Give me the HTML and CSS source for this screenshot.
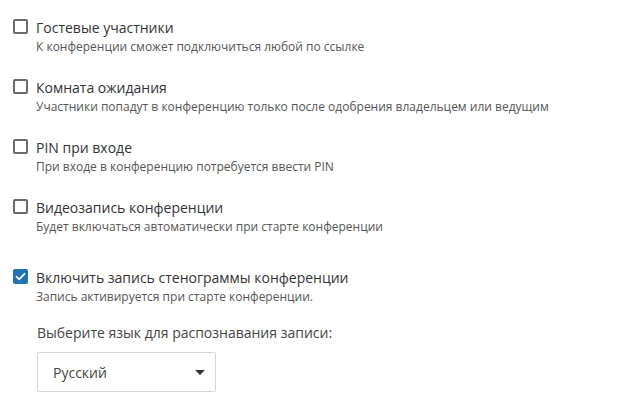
FILE: index.html
```html
<!DOCTYPE html>
<html lang="ru">
<head>
<meta charset="utf-8">
<link rel="stylesheet" href="styles.css">
</head>
<body>
<div class="settings">
  <div class="option">
    <span class="box"></span>
    <div class="text">
      <div class="title">Гостевые участники</div>
      <div class="desc">К конференции сможет подключиться любой по ссылке</div>
    </div>
  </div>
  <div class="option">
    <span class="box"></span>
    <div class="text">
      <div class="title">Комната ожидания</div>
      <div class="desc">Участники попадут в конференцию только после одобрения владельцем или ведущим</div>
    </div>
  </div>
  <div class="option">
    <span class="box"></span>
    <div class="text">
      <div class="title">PIN при входе</div>
      <div class="desc">При входе в конференцию потребуется ввести PIN</div>
    </div>
  </div>
  <div class="option">
    <span class="box"></span>
    <div class="text">
      <div class="title">Видеозапись конференции</div>
      <div class="desc">Будет включаться автоматически при старте конференции</div>
    </div>
  </div>
  <div class="option option-last">
    <span class="box checked">
      <svg viewBox="0 0 15 15" width="15" height="15"><path d="M3.5 7.7 L6.2 10.3 L11.5 4.8" fill="none" stroke="#fff" stroke-width="1.8" stroke-linecap="round" stroke-linejoin="round"/></svg>
    </span>
    <div class="text">
      <div class="title">Включить запись стенограммы конференции</div>
      <div class="desc">Запись активируется при старте конференции.</div>
      <div class="lang-label">Выберите язык для распознавания записи:</div>
      <div class="select">
        <span class="select-value">Русский</span>
        <span class="caret"></span>
      </div>
    </div>
  </div>
</div>
</body>
</html>
```

FILE: styles.css
```css
html, body {
  margin: 0;
  padding: 0;
  background: #ffffff;
}
body {
  font-family: "Open Sans", "Noto Sans", sans-serif;
  color: #333333;
}
.settings {
  padding: 18px 0 0 13px;
}
.option {
  display: flex;
  gap: 8px;
  align-items: flex-start;
  margin-bottom: 22px;
}
.option-last {
  margin-top: 32px;
}
.box {
  flex: none;
  width: 15px;
  height: 15px;
  box-sizing: border-box;
  border: 2px solid #6b6b6b;
  border-radius: 2px;
  margin-top: 1px;
  position: relative;
}
.box.checked {
  background: #1f72b6;
  border-color: #1f72b6;
}
.box.checked svg {
  position: absolute;
  left: -2px;
  top: -2px;
}
.title {
  font-size: 14px;
  line-height: 20px;
  color: #333333;
}
.desc {
  font-size: 12px;
  line-height: 18px;
  color: #555555;
}
.lang-label {
  margin-top: 17px;
  margin-left: 1px;
  font-size: 14px;
  line-height: 20px;
  color: #444444;
}
.select {
  margin-top: 9px;
  margin-left: 1px;
  width: 179px;
  height: 40px;
  box-sizing: border-box;
  border: 1px solid #d6d6d6;
  border-radius: 2px;
  display: flex;
  align-items: center;
  justify-content: space-between;
  padding: 0 10px 0 15px;
}
.select-value {
  font-size: 14px;
  color: #444444;
}
.caret {
  width: 0;
  height: 0;
  border-left: 5px solid transparent;
  border-right: 5px solid transparent;
  border-top: 5px solid #333333;
}
```
